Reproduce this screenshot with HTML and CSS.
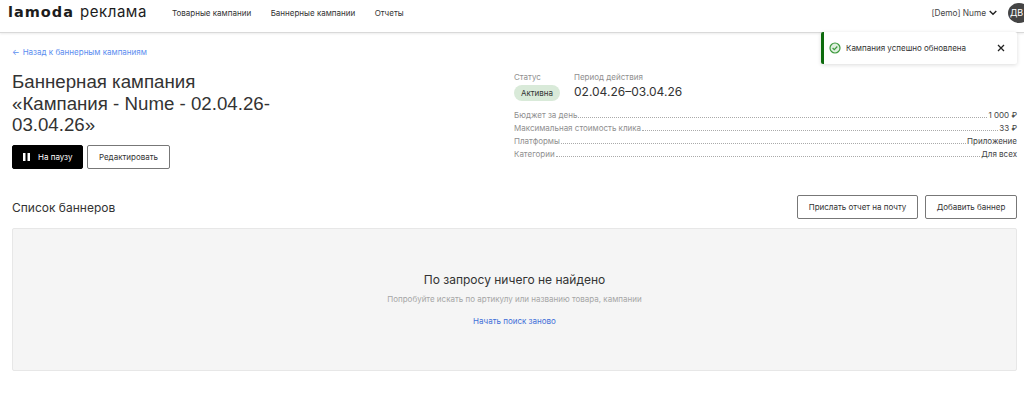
FILE: index.html
```html
<!DOCTYPE html>
<html lang="ru">
<head>
<meta charset="utf-8">
<title>Баннерная кампания</title>
<link rel="stylesheet" href="styles.css">
</head>
<body>
<header class="topbar">
  <div class="brand"><span class="brand-main">lamoda</span><span class="brand-sub">реклама</span></div>
  <nav class="nav">
    <a>Товарные кампании</a>
    <a>Баннерные кампании</a>
    <a>Отчеты</a>
  </nav>
  <div class="account">
    <span>[Demo] Nume</span>
    <svg class="chev" width="8" height="6" viewBox="0 0 8 6"><path d="M.7 1l3.3 3.3L7.3 1" fill="none" stroke="#222" stroke-width="1.4"/></svg>
    <span class="avatar">ДВ</span>
  </div>
</header>
<div class="toast">
  <svg width="12" height="12" viewBox="0 0 12 12"><circle cx="6" cy="6" r="5" fill="#dff0df" stroke="#3f9a3f" stroke-width="1.2"/><path d="M3.6 6l1.7 1.7 3-3.2" fill="none" stroke="#3f9a3f" stroke-width="1.2"/></svg>
  <span class="toast-text">Кампания успешно обновлена</span>
  <svg class="toast-x" width="8" height="8" viewBox="0 0 8 8"><path d="M1 1l6 6M7 1l-6 6" stroke="#222" stroke-width="1.3"/></svg>
</div>
<main class="page">
  <a class="back"><span class="back-arrow">←</span>Назад к баннерным кампаниям</a>
  <section class="summary">
    <div class="summary-left">
      <h1>Баннерная кампания «Кампания - Nume - 02.04.26-03.04.26»</h1>
      <div class="actions">
        <button class="btn btn-dark"><svg width="7" height="8" viewBox="0 0 7 8"><path d="M0 0h2.5v8H0zM4.5 0H7v8H4.5z" fill="#fff"/></svg>На паузу</button>
        <button class="btn btn-edit">Редактировать</button>
      </div>
    </div>
    <div class="summary-right">
      <div class="facts">
        <div class="fact">
          <div class="label">Статус</div>
          <span class="pill">Активна</span>
        </div>
        <div class="fact">
          <div class="label">Период действия</div>
          <div class="period">02.04.26–03.04.26</div>
        </div>
      </div>
      <div class="rows">
        <div class="row"><span class="key">Бюджет за день</span><i></i><span class="val">1 000 ₽</span></div>
        <div class="row"><span class="key">Максимальная стоимость клика</span><i></i><span class="val">33 ₽</span></div>
        <div class="row"><span class="key">Платформы</span><i></i><span class="val">Приложение</span></div>
        <div class="row"><span class="key">Категории</span><i></i><span class="val">Для всех</span></div>
      </div>
    </div>
  </section>
  <section class="list-head">
    <h2>Список баннеров</h2>
    <div class="list-actions">
      <button class="btn btn-report">Прислать отчет на почту</button>
      <button class="btn btn-add">Добавить баннер</button>
    </div>
  </section>
  <section class="empty">
    <div class="empty-title">По запросу ничего не найдено</div>
    <div class="empty-sub">Попробуйте искать по артикулу или названию товара, кампании</div>
    <a class="empty-link">Начать поиск заново</a>
  </section>
</main>
</body>
</html>
```
FILE: styles.css
```css
* { box-sizing: border-box; }
html, body { margin: 0; padding: 0; }
body {
  background: #fff;
  color: #222;
  font-family: Inter, "Liberation Sans", sans-serif;
  font-size: 8px;
  overflow: hidden;
  height: 420px;
  position: relative;
}
.topbar {
  height: 33px;
  display: flex;
  align-items: center;
  padding: 0 0 0 8px;
  border-bottom: 1px solid #d9d9d9;
  box-shadow: 0 1px 2px rgba(0,0,0,.08);
}
.brand {
  width: 164px;
  flex-shrink: 0;
  display: flex;
  align-items: baseline;
  gap: 6px;
  margin-top: -10px;
  color: #1c1c1c;
}
.brand-main { font: 700 14.5px "DejaVu Sans", sans-serif; letter-spacing: 1px; }
.brand-sub { font-size: 15px; letter-spacing: .55px; }
.nav { display: flex; gap: 19.5px; margin-top: -7px; }
.nav a { color: #333; }
.account {
  margin-left: auto;
  margin-right: -6px;
  display: flex;
  align-items: center;
  margin-top: -7px;
  color: #444;
  font-size: 8.3px;
}
.chev { margin-left: 3px; }
.avatar {
  width: 22px;
  height: 20px;
  flex-shrink: 0;
  margin-left: 11px;
  padding-left: 2px;
  background: #444;
  color: #fff;
  border-radius: 50%;
  display: flex;
  align-items: center;
  font-size: 9px;
}
.toast {
  position: absolute;
  left: 821px;
  top: 32px;
  width: 196px;
  height: 32px;
  background: #fff;
  border-left: 3px solid #0d6b0d;
  border-radius: 2px;
  box-shadow: 0 1px 4px rgba(0,0,0,.14);
  display: flex;
  align-items: center;
  padding-left: 5px;
}
.toast-text { margin-left: 5px; color: #333; }
.toast-x { margin-left: auto; margin-right: 12px; }
.page { padding: 0 7px 0 12px; }
.back {
  display: block;
  margin-top: 13px;
  color: #5b8def;
  line-height: 12px;
}
.back-arrow { margin-right: 3px; }
.summary { display: flex; margin-top: 13px; height: 117px; }
.summary-left { width: 502px; flex-shrink: 0; }
h1 {
  margin: 0;
  width: 275px;
  font: 400 18.7px/21.5px "Liberation Sans", sans-serif;
  color: #333;
}
.actions { display: flex; gap: 4px; margin-top: 9.5px; }
.btn {
  height: 24px;
  font: inherit;
  background: #fff;
  border: 1px solid #777;
  border-radius: 2px;
  color: #333;
  padding: 0;
}
.btn-dark {
  width: 71px;
  background: #000;
  border-color: #000;
  color: #fff;
  display: flex;
  align-items: center;
  justify-content: flex-start;
  gap: 8px;
  padding-left: 10px;
}
.btn-edit { width: 83px; }
.summary-right { flex: 1; }
.facts { display: flex; gap: 14px; }
.fact { flex-shrink: 0; }
.label { color: #8f8f8f; line-height: 12px; }
.pill {
  display: block;
  margin-top: 2px;
  width: 46px;
  height: 16px;
  line-height: 16px;
  text-align: center;
  background: #d9ead9;
  border-radius: 8px;
  color: #333;
}
.period { font: 400 12px/18px Inter, sans-serif; margin-top: 0; color: #333; }
.rows { margin-top: 8px; }
.row { display: flex; align-items: baseline; height: 13px; line-height: 13px; }
.row i { flex: 1; border-bottom: 1px dotted #aaa; margin: 0 1px; }
.key { color: #8f8f8f; }
.val { color: #444; }
.list-head {
  display: flex;
  align-items: center;
  justify-content: space-between;
  margin-top: 7px;
  height: 24px;
}
h2 { margin: 0; font-size: 12px; font-weight: 400; color: #333; }
.list-actions { display: flex; gap: 7px; }
.btn-report { width: 121px; }
.btn-add { width: 92px; }
.empty {
  margin-top: 9px;
  height: 143px;
  background: #f5f5f5;
  border: 1px solid #e7e7e7;
  border-radius: 2px;
  display: flex;
  flex-direction: column;
  align-items: center;
  padding-top: 43px;
}
.empty-title { font-size: 12px; line-height: 16px; color: #333; }
.empty-sub { margin-top: 5px; color: #a6a6a6; line-height: 12px; }
.empty-link { margin-top: 10px; color: #3f6fd8; line-height: 12px; }
```
